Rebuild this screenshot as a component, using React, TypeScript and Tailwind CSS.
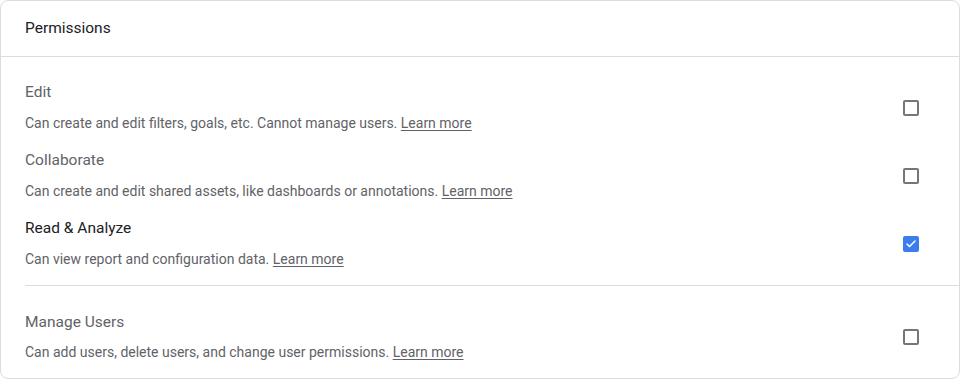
import { Check } from 'lucide-react'

interface Permission {
  title: string
  description: string
  checked: boolean
}

const mainPermissions: Permission[] = [
  {
    title: 'Edit',
    description: 'Can create and edit filters, goals, etc. Cannot manage users.',
    checked: false,
  },
  {
    title: 'Collaborate',
    description: 'Can create and edit shared assets, like dashboards or annotations.',
    checked: false,
  },
  {
    title: 'Read & Analyze',
    description: 'Can view report and configuration data.',
    checked: true,
  },
]

const managePermission: Permission = {
  title: 'Manage Users',
  description: 'Can add users, delete users, and change user permissions.',
  checked: false,
}

function Box({ checked }: { checked: boolean }) {
  if (checked) {
    return (
      <span className="flex h-4 w-4 items-center justify-center rounded-[2px] bg-[#3b7ded]">
        <Check className="h-3 w-3 text-white" strokeWidth={3} />
      </span>
    )
  }
  return <span className="block h-4 w-4 rounded-[2px] border-2 border-[#767676]" />
}

function PermissionRow({ p, tight }: { p: Permission; tight?: boolean }) {
  return (
    <div className="flex items-center pr-[40px]">
      <div className="flex-1">
        <div
          className={`text-[15.5px] leading-5 ${p.checked ? 'text-[#202124]' : 'text-[#5f6368]'}`}
        >
          {p.title}
        </div>
        <div className={`${tight ? 'mt-[10px]' : 'mt-[11px]'} text-sm leading-5 text-[#5f6368]`}>
          {p.description}{' '}
          <a href="#" className="underline underline-offset-2">
            Learn more
          </a>
        </div>
      </div>
      <Box checked={p.checked} />
    </div>
  )
}

export default function App() {
  return (
    <div className="h-[379px] w-[961px] bg-white font-['Roboto',sans-serif]">
      <div className="w-[960px] rounded-lg border border-[#dadce0] bg-white">
        <div className="flex h-14 items-center border-b border-[#dadce0] px-6 pt-px text-[15.5px] text-[#202124]">
          Permissions
        </div>
        <div className="pl-6">
          <div className="flex flex-col gap-[17px] pt-[25px] pb-4">
            {mainPermissions.map((p) => (
              <PermissionRow key={p.title} p={p} />
            ))}
          </div>
          <div className="border-t border-[#dadce0] pt-[26px] pb-4">
            <PermissionRow p={managePermission} tight />
          </div>
        </div>
      </div>
    </div>
  )
}
